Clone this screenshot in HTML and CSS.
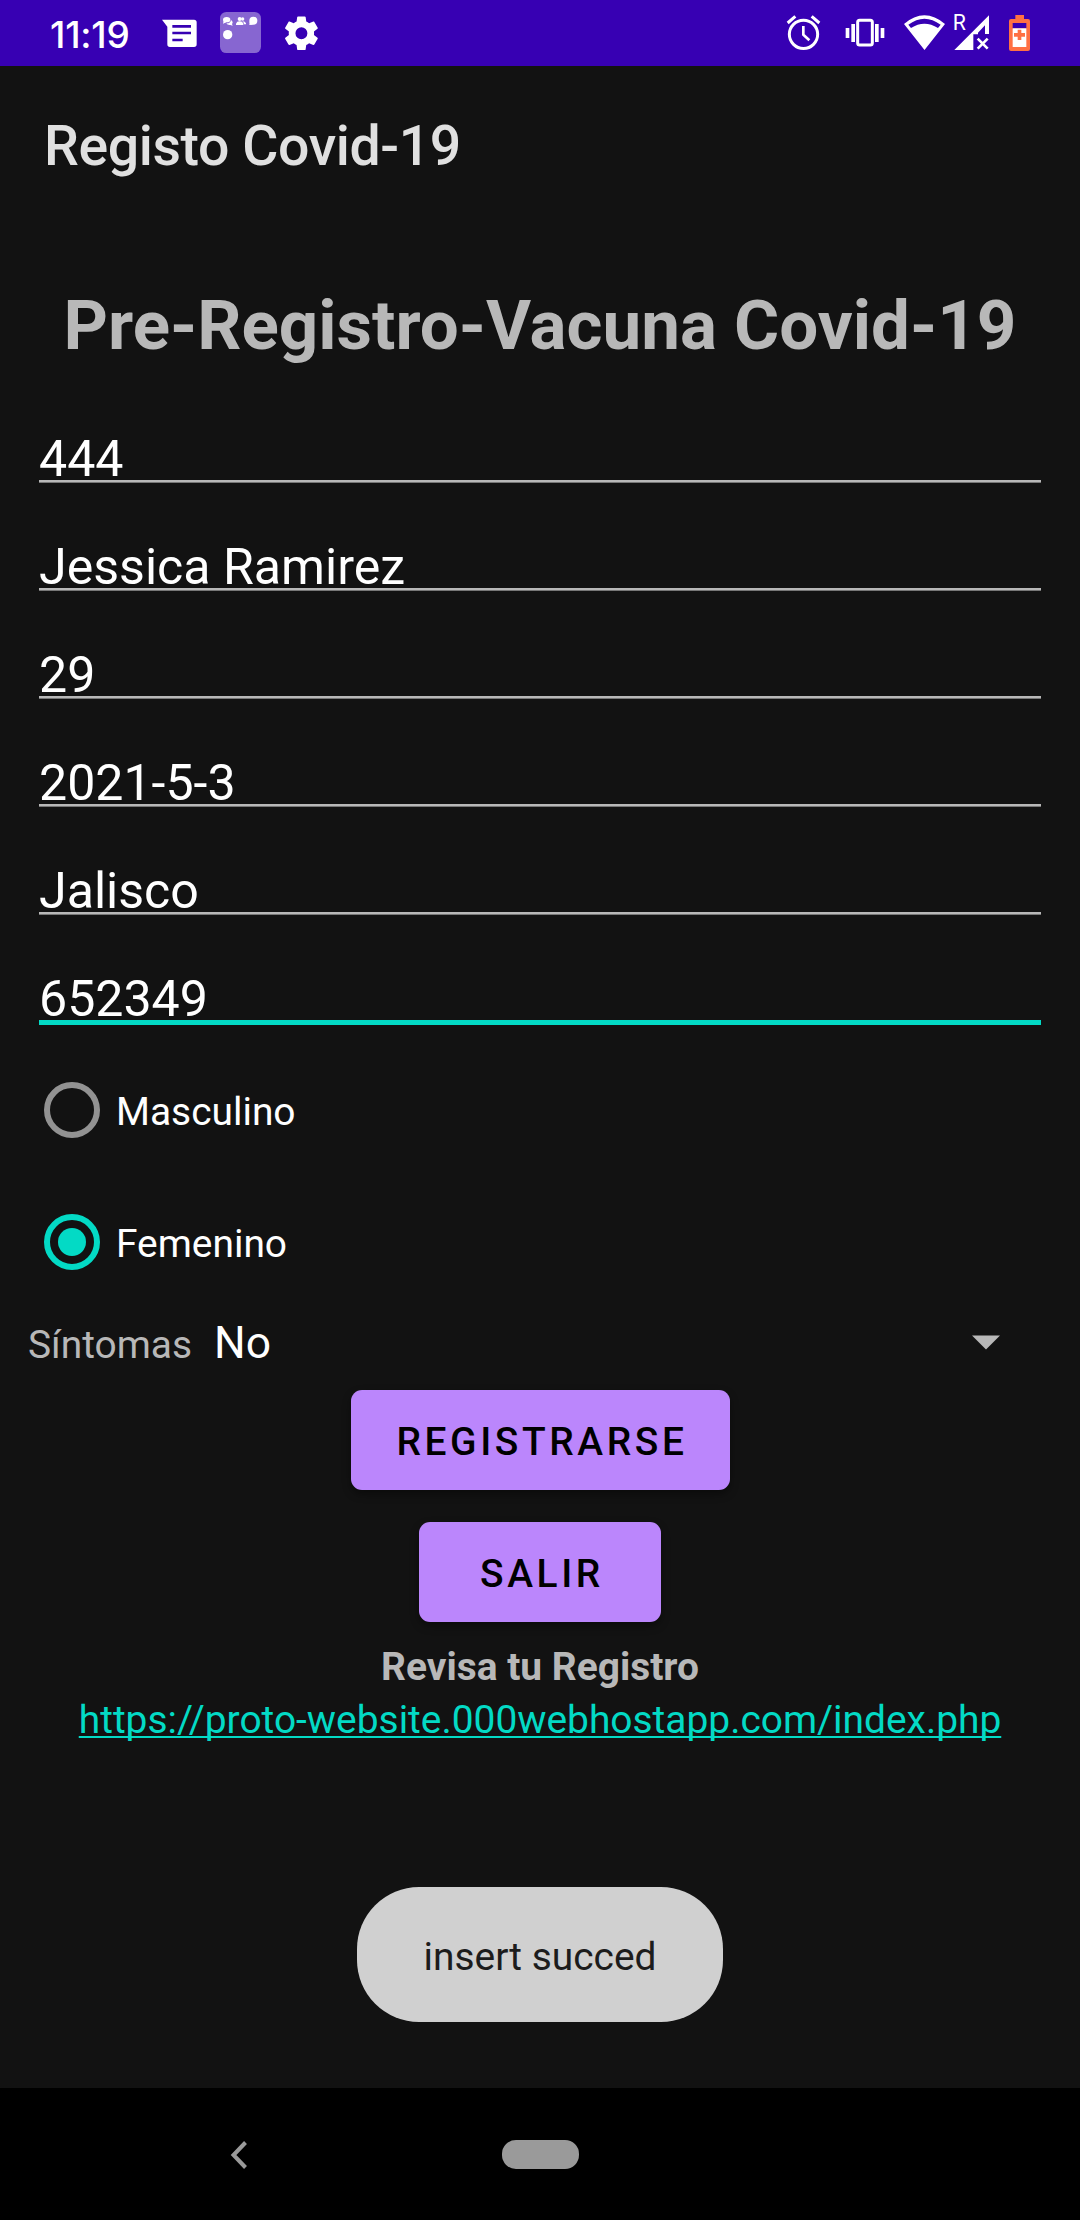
FILE: index.html
```html
<!DOCTYPE html>
<html lang="es">
<head>
<meta charset="utf-8">
<title>Registo Covid-19</title>
<link rel="stylesheet" href="styles.css">
</head>
<body>
<div class="screen">
  <header class="status">
    <span class="time">11:19</span>
    <svg class="messages" width="37" height="66" viewBox="483 0 111 198"><path fill="#fff" d="M486 59H582Q590 59 590 67V133Q590 141 582 141H510Q502 141 502 133V80Z"/><path fill="#3700b3" d="M517 75h56v8h-56zM517 95h56v8h-56zM517 116h31v8h-31z"/></svg>
    <svg class="folder" width="41" height="66" viewBox="660 0 123 198"><rect x="660" y="36" width="123" height="123" rx="19" fill="#8766d1"/><g fill="#fff"><ellipse cx="680" cy="59" rx="11" ry="8"/><path d="M671 62l-2 9 10-4zM693 60q8 6 3 12l2 5-7-2q-9 1-12-5 12 1 14-10z"/><circle cx="719" cy="57" r="6"/><circle cx="728" cy="57" r="5"/><path d="M708 75v-4q2-7 11-7t11 7v4zM727 64q9 0 11 6v3h-6q0-6-5-9z"/><circle cx="760" cy="62" r="12"/><path d="M749 64l-1 11 11-1z"/><circle cx="683" cy="104" r="14"/></g></svg>
    <svg class="gear" width="43" height="66" viewBox="840 0 129 198"><path fill="#fff" transform="translate(841 36.500) scale(5.270)" d="M19.140 12.940c.04-.3.06-.61.06-.94 0-.32-.02-.64-.07-.94l2.030-1.580c.18-.14.23-.41.12-.61l-1.920-3.320c-.12-.22-.37-.29-.59-.22l-2.390.96c-.5-.38-1.030-.7-1.620-.94l-.36-2.540c-.04-.24-.24-.41-.48-.41h-3.840c-.24 0-.43.17-.47.41l-.36 2.540c-.59.24-1.130.57-1.620.94l-2.390-.96c-.22-.08-.47 0-.59.22L2.740 8.870c-.12.21-.08.47.12.61l2.030 1.580c-.05.3-.09.63-.09.94s.02.64.07.94l-2.030 1.580c-.18.14-.23.41-.12.61l1.920 3.320c.12.22.37.29.59.22l2.390-.96c.5.38 1.030.7 1.620.94l.36 2.540c.05.24.24.41.48.41h3.840c.24 0 .44-.17.47-.41l.36-2.540c.59-.24 1.130-.56 1.620-.94l2.390.96c.22.08.47 0 .59-.22l1.920-3.320c.12-.22.07-.47-.12-.61l-2.010-1.580zM12 15.400a3.400 3.400 0 1 1 0-6.800 3.400 3.400 0 0 1 0 6.800z"/></svg>
    <svg class="alarm" width="35" height="66" viewBox="78 0 105 198"><g fill="none" stroke="#fff"><circle cx="130.500" cy="103" r="42.500" stroke-width="9"/><path stroke-width="9" d="M83 69l23-20M178 69l-23-20"/><path stroke-width="8" d="M130 78v26l18 17"/></g></svg>
    <svg class="vibrate" width="40" height="66" viewBox="255 0 120 198"><rect x="293" y="61" width="44" height="74" rx="6" fill="none" stroke="#fff" stroke-width="9"/><path fill="#fff" d="M274 72h11v54h-11zM257 84h11v30h-11zM345 72h11v54h-11zM362 84h11v30h-11z"/></svg>
    <svg class="wifi" width="41" height="66" viewBox="432 0 123 198"><path fill="#fff" fill-rule="evenodd" d="M432 72Q493 20 555 72L493.500 150ZM445 74L453 84Q493 58 534 84L542 74Q493 38 445 74Z"/></svg>
    <svg class="signal" width="38" height="66" viewBox="576 0 114 198"><text class="roaming" x="578" y="89">R</text><path fill="#fff" fill-rule="evenodd" d="M687 46V102H675V76L654 98V103H640V150H583Z"/><path fill="none" stroke="#fff" stroke-width="8" d="M653 116l30 30M683 116l-30 30"/></svg>
    <svg class="battery" width="21" height="66" viewBox="747 0 63 198"><path fill="#ff7043" d="M766 45h26v12h12q6 0 6 6v84q0 6-6 6h-51q-6 0-6-6V63q0-6 6-6h13z"/><path fill="#3700b3" d="M758 69h41v16h-41z"/><path fill="#fff" d="M758 85h41v56h-41z"/><path fill="#ff7043" d="M773 89h11v10h11v11h-11v10h-11v-10h-11V99h11z"/></svg>
  </header>

  <div class="appbar">Registo Covid-19</div>

  <main class="content">
    <h1 class="heading">Pre-Registro-Vacuna Covid-19</h1>
    <div class="field">444</div>
    <div class="field">Jessica Ramirez</div>
    <div class="field">29</div>
    <div class="field">2021-5-3</div>
    <div class="field">Jalisco</div>
    <div class="field focused">652349</div>

    <div class="radios">
      <label class="radio"><span class="ring"></span><span class="radio-text">Masculino</span></label>
      <label class="radio checked"><span class="ring"></span><span class="radio-text">Femenino</span></label>
    </div>

    <div class="symptoms">
      <span class="label">Síntomas</span>
      <span class="value">No</span>
      <svg class="arrow" width="28" height="15" viewBox="0 0 28 15"><path fill="#b8b8b8" d="M0 .500h28l-14 14z"/></svg>
    </div>

    <div class="actions">
      <button class="button register">REGISTRARSE</button>
      <button class="button exit">SALIR</button>
    </div>
    <p class="review">Revisa tu Registro</p>
    <a class="link">https://proto-website.000webhostapp.com/index.php</a>
    <div class="toast">insert succed</div>
  </main>

  <nav class="navbar">
    <svg class="back" width="18" height="30" viewBox="0 0 18 30"><path fill="none" stroke="#9a9a9a" stroke-width="4" d="M15.500 2.500L3.500 15l12 12.500"/></svg>
    <span class="home"></span>
  </nav>
</div>
</body>
</html>
```

FILE: styles.css
```css
* { box-sizing: border-box; }
body { margin: 0; background: #121212; font-family: Roboto, sans-serif; }
.screen { position: relative; display: flex; flex-direction: column; width: 1080px; height: 2220px; overflow: hidden; background: #121212; color: #fff; }

.status { display: flex; flex: none; height: 66px; padding-left: 50px; background: #3700b3; }
.status svg { display: block; flex: none; }
.time { width: 111px; font: 500 37px/69px Inter, sans-serif; letter-spacing: -0.2px; white-space: nowrap; }
.folder { margin-left: 22px; }
.gear { margin-left: 19px; }
.alarm { margin-left: 463px; }
.vibrate { margin-left: 24px; }
.wifi { margin-left: 19px; }
.signal { margin-left: 7px; }
.battery { margin-left: 19px; }
.roaming { font: 400 64px Roboto, sans-serif; fill: #fff; }

.appbar { flex: none; height: 159px; padding-left: 44px; color: #e0e0e0; font-size: 55.4px; font-weight: 500; line-height: 161px; letter-spacing: -0.4px; }

.content { flex: 1; display: flex; flex-direction: column; }
.heading { margin: 0; height: 149px; padding-top: 52px; color: #b8b8b8; font-size: 69.1px; font-weight: 700; line-height: 98px; text-align: center; white-space: nowrap; }

.field { display: flex; align-items: flex-end; flex: none; height: 108px; margin: 0 39px; border-bottom: 2px solid #b8b8b8; box-shadow: 0 1px 0 #777; font-size: 50.1px; line-height: 42px; }
.field.focused { height: 111px; border-bottom: 5px solid #03dac5; box-shadow: none; }

.radios { margin-top: 19px; padding-left: 44px; }
.radio { display: flex; align-items: center; gap: 16px; height: 132px; }
.ring { display: flex; align-items: center; justify-content: center; width: 56px; height: 56px; border: 6px solid #929292; border-radius: 50%; }
.checked .ring { border-color: #03dac5; }
.checked .ring::after { content: ""; width: 28px; height: 28px; border-radius: 50%; background: #03dac5; }
.radio-text { padding-top: 3px; font-size: 38.9px; }

.symptoms { display: flex; align-items: baseline; height: 82px; padding: 0 80px 0 28px; line-height: 70px; }
.label { width: 186px; color: #b8b8b8; font-size: 38.9px; }
.value { flex: 1; font-size: 44.4px; }
.arrow { align-self: flex-start; margin-top: 27px; }

.actions { display: flex; flex-direction: column; align-items: center; gap: 32px; }
.button { height: 100px; padding: 3px 0 0 4px; border: 0; border-radius: 11px; background: #bb86fc; box-shadow: 0 4px 8px rgba(0, 0, 0, .4); color: #000; font: 500 38.9px Roboto, sans-serif; letter-spacing: 3.6px; }
.register { width: 379px; }
.exit { width: 242px; }

.review { margin: 22px 0 3px; color: #b8b8b8; font-size: 38.9px; font-weight: 700; line-height: 46px; text-align: center; }
.link { align-self: center; color: #03dac5; font-size: 38.9px; line-height: 53px; text-decoration: underline; text-decoration-thickness: 2px; text-underline-offset: 3px; text-decoration-skip-ink: none; }

.toast { position: absolute; top: 1887px; left: 357px; width: 366px; height: 135px; border-radius: 62px; background: #d0d0d0; color: #1c1c1c; font-size: 38.9px; line-height: 139px; text-align: center; }

.navbar { display: flex; align-items: center; flex: none; height: 132px; padding: 1px 0 0 230px; background: #000; }
.home { width: 77px; height: 29px; margin-left: 254px; border-radius: 14px; background: #9a9a9a; }
```
